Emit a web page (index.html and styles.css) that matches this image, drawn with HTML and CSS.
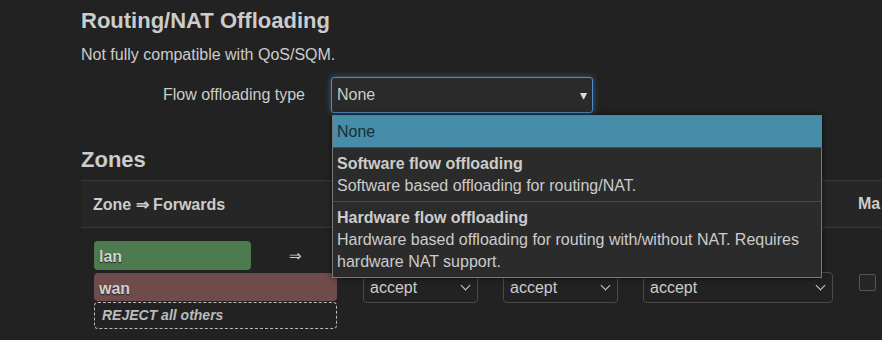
FILE: index.html
```html
<!DOCTYPE html>
<html lang="en">
  <head>
    <meta charset="UTF-8" />
    <title>Firewall - Zone Settings</title>
    <link rel="stylesheet" href="styles.css">
  </head>
  <body>
    <div class="page">
      <h3 class="section-title">Routing/NAT Offloading</h3>
      <p class="section-desc">Not fully compatible with QoS/SQM.</p>

      <div class="field-row">
        <label class="field-label">Flow offloading type</label>
        <div class="dropdown">
          <div class="dropdown-value">
            <span>None</span>
            <span class="dropdown-caret">&#9662;</span>
          </div>
          <ul class="dropdown-menu">
            <li class="dropdown-item selected">None</li>
            <li class="dropdown-item">
              <strong>Software flow offloading</strong>
              <span>Software based offloading for routing/NAT.</span>
            </li>
            <li class="dropdown-item">
              <strong>Hardware flow offloading</strong>
              <span>Hardware based offloading for routing with/without NAT. Requires hardware NAT support.</span>
            </li>
          </ul>
        </div>
      </div>

      <h3 class="section-title zones-title">Zones</h3>
      <div class="table">
        <div class="table-head">
          <div class="th th-zone">Zone &rArr; Forwards</div>
          <div class="th th-masq">Ma</div>
        </div>
        <div class="table-row">
          <div class="zone-forwards">
            <div class="zone-src">
              <span class="zone-badge lan">lan</span>
              <span class="zone-arrow">&rArr;</span>
            </div>
            <span class="zone-badge wan">wan</span>
            <span class="zone-reject">REJECT all others</span>
          </div>
          <div class="policy"><span class="select w-small">accept<i class="chev"></i></span></div>
          <div class="policy"><span class="select w-small">accept<i class="chev"></i></span></div>
          <div class="policy"><span class="select w-wide">accept<i class="chev"></i></span></div>
          <div class="policy"><span class="checkbox"></span></div>
        </div>
      </div>
    </div>
  </body>
</html>
```

FILE: styles.css
```css
body {
  margin: 0;
  padding: 0;
  background: #222222;
  color: #cccccc;
  font-family: "Liberation Sans", Arial, sans-serif;
  overflow: hidden;
}

.page {
  padding: 8px 0 0 81px;
}

.section-title {
  margin: 0;
  font-size: 22px;
  font-weight: bold;
  line-height: 26px;
  color: #cccccc;
}

.section-desc {
  margin: 11px 0 0;
  font-size: 16px;
  line-height: 20px;
}

.field-row {
  display: flex;
  align-items: center;
  margin-top: 12px;
  height: 35px;
}

.field-label {
  width: 224px;
  text-align: right;
  font-size: 16px;
  padding-right: 26px;
}

.dropdown {
  position: relative;
}

.dropdown-value {
  box-sizing: border-box;
  width: 262px;
  height: 36px;
  display: flex;
  align-items: center;
  justify-content: space-between;
  padding: 0 5px 0 5px;
  font-size: 16px;
  background: #2a2a2a;
  border: 1px solid #4b8ec9;
  border-radius: 3px;
  box-shadow: 0 0 6px rgba(75, 142, 201, 0.6);
}

.dropdown-caret {
  font-size: 14px;
  color: #dddddd;
}

.dropdown-menu {
  position: absolute;
  top: 38px;
  left: 1px;
  width: 490px;
  box-sizing: border-box;
  margin: 0;
  padding: 0;
  list-style: none;
  background: #2b2b2b;
  border: 1px solid #777777;
  box-shadow: 0 0 6px rgba(0, 0, 0, 0.6);
  z-index: 5;
}

.dropdown-item {
  padding: 5px 4px 4px;
  font-size: 16px;
  line-height: 22px;
  border-top: 1px solid #4a4a4a;
}

.dropdown-item strong,
.dropdown-item span {
  display: block;
}

.dropdown-item.selected {
  border-top: none;
  background: #458da8;
  color: #1c2c33;
  padding: 5px 4px 4px;
}

.zones-title {
  margin-top: 35px;
}

.table {
  margin-top: 7px;
}

.table-head {
  display: flex;
  justify-content: space-between;
  height: 46px;
  align-items: center;
  background: #262626;
  border-top: 1px solid #393939;
  border-bottom: 1px solid #393939;
  font-size: 16px;
  font-weight: bold;
}

.th-zone {
  padding-left: 12px;
}

.th-masq {
  width: 24px;
  overflow: hidden;
}

.table-row {
  display: flex;
  align-items: flex-start;
  padding: 13px 0 0 13px;
}

.zone-forwards {
  width: 243px;
  display: flex;
  flex-direction: column;
  gap: 3px;
}

.zone-src {
  display: flex;
  align-items: center;
}

.zone-badge {
  box-sizing: border-box;
  height: 29px;
  line-height: 31px;
  padding: 0 5px;
  border-radius: 4px;
  font-size: 16px;
  font-weight: bold;
  color: #d0d0d0;
  text-shadow: 0 1px 1px rgba(0, 0, 0, 0.7);
}

.lan {
  width: 157px;
  background: #4e7a4f;
}

.wan {
  width: 243px;
  height: 28px;
  background: #6f4b4b;
}

.zone-arrow {
  margin-left: 38px;
  font-size: 15px;
}

.zone-reject {
  box-sizing: border-box;
  height: 27px;
  margin-top: -2px;
  line-height: 25px;
  padding-left: 7px;
  border: 1px dashed #bbbbbb;
  border-radius: 4px;
  font-size: 14px;
  font-style: italic;
  font-weight: bold;
  color: #bbbbbb;
}

.policy {
  margin-top: 31px;
  margin-left: 26px;
}

.policy + .policy {
  margin-left: 25px;
}

.select {
  box-sizing: border-box;
  display: flex;
  align-items: center;
  justify-content: space-between;
  height: 31px;
  padding: 0 8px 0 6px;
  border: 1px solid #4a4a4a;
  border-radius: 4px;
  background: #222222;
  font-size: 16px;
}

.w-small {
  width: 115px;
}

.w-wide {
  width: 190px;
}

.chev {
  width: 6px;
  height: 6px;
  border-right: 1.5px solid #cccccc;
  border-bottom: 1.5px solid #cccccc;
  transform: rotate(45deg);
  margin-top: -4px;
}

.policy:last-child {
  margin-left: 26px;
  margin-top: 33px;
}

.checkbox {
  display: block;
  width: 15px;
  height: 15px;
  border: 1px solid #555555;
  border-radius: 2px;
  background: #262626;
}
```
